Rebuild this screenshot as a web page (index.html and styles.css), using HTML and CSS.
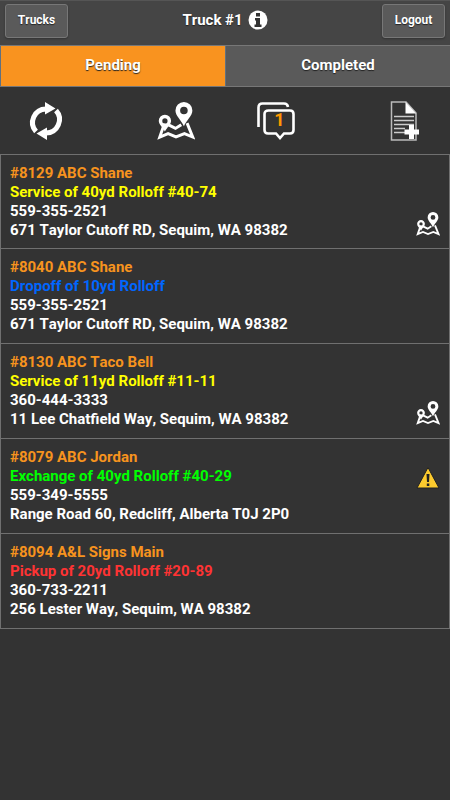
FILE: index.html
```html
<!DOCTYPE html>
<html lang="en">
<head>
<meta charset="utf-8">
<meta name="viewport" content="width=device-width, initial-scale=1">
<title>Truck #1</title>
<link rel="stylesheet" href="styles.css">
</head>
<body>
<svg class="defs" aria-hidden="true">
  <symbol id="map" viewBox="0 0 36 36">
    <path fill="none" stroke="currentColor" stroke-width="2.8" d="M7 20.5 2.6 33.2 10.500 30 18 33 26 30 33.800 33.200 28.500 20M10.500 21.500 17.500 25 23 21.500"/>
    <path fill="currentColor" fill-rule="evenodd" d="M25.500 0a8 8 0 0 1 8 8.200C33.500 13 28 17 25.500 23 23 17 17.500 13 17.500 8.200A8 8 0 0 1 25.500 0Zm0 4.500a3.600 3.600 0 1 0 0 7.200 3.600 3.600 0 0 0 0-7.200ZM7.500 12a5.800 5.800 0 0 1 5.800 6C13.300 21.500 9.500 24 7.500 28 5.500 24 1.700 21.500 1.700 18a5.800 5.800 0 0 1 5.800-6Zm0 3.400a2.500 2.500 0 1 0 0 5 2.500 2.500 0 0 0 0-5Z"/>
  </symbol>
</svg>
<header class="bar">
  <button class="btn" type="button">Trucks</button>
  <h1 class="title">Truck #1
    <svg class="info" viewBox="0 0 20 20" aria-hidden="true"><circle cx="10" cy="10" r="9.500" fill="#fff"/><path fill="#333" d="M8 3h4v3.500H8zM7 8h5v6.500h1.500V17h-7v-2.500H8v-4H7z"/></svg>
  </h1>
  <button class="btn" type="button">Logout</button>
</header>
<nav class="tabs">
  <button class="tab active" type="button">Pending</button>
  <button class="tab" type="button">Completed</button>
</nav>
<div class="tools">
  <button class="tool" type="button" aria-label="Refresh">
    <svg class="icon" viewBox="0 0 38 38"><g fill="none" stroke="#fff" stroke-width="5"><path d="M9 29.500A13.500 13.500 0 0 1 19 7"/><path d="M29 8.500A13.500 13.500 0 0 1 19 31"/></g><path fill="#fff" d="m18 0 10.500 6.500L18 12.500ZM20 25.500v12.500L9.500 31.500Z"/></svg>
  </button>
  <div class="tool-pair">
    <button class="tool" type="button" aria-label="Map"><svg class="icon"><use href="#map"/></svg></button>
    <button class="tool" type="button" aria-label="Messages">
      <svg class="icon" viewBox="0 0 38 38"><g fill="none" stroke="#fff" stroke-width="2.600"><path d="M1.500 25V5.500q0-4 4-4H27q3.500 0 4 3.500"/><path d="M11.500 8.500H33q3.500 0 3.500 3.500v16q0 3.500-3.500 3.500h-6l-4 4.500-4-4.500h-8Q7.500 31.500 7.500 28V12q0-3.500 4-3.500Z"/></g></svg>
      <span class="count">1</span>
    </button>
  </div>
  <button class="tool" type="button" aria-label="Add document">
    <svg class="icon wide" viewBox="0 0 30 40" preserveAspectRatio="xMaxYMid"><path fill="none" stroke="#bbb" stroke-width="1.500" d="M1.500 1H16l10 11v27H1.500Z"/><path fill="#fff" d="M15.500 1 26 12.500H15.500Z"/><path stroke="#ccc" stroke-width="1.500" d="M4 15.500h20M4 19.500h20M4 23.500h20M4 27.500h11M4 31.500h11"/><path fill="#fff" d="M19 24h5v4.500h5v5h-5V38h-5v-4.500h-4.500v-5H19Z"/></svg>
  </button>
</div>
<main>
  <ul class="jobs">
    <li class="job">
      <div class="details"><p class="name">#8129 ABC Shane</p><p class="service">Service of 40yd Rolloff #40-74</p><p>559-355-2521</p><p>671 Taylor Cutoff RD, Sequim, WA 98382</p></div>
      <svg class="mark"><use href="#map"/></svg>
    </li>
    <li class="job">
      <div class="details"><p class="name">#8040 ABC Shane</p><p class="dropoff">Dropoff of 10yd Rolloff</p><p>559-355-2521</p><p>671 Taylor Cutoff RD, Sequim, WA 98382</p></div>
    </li>
    <li class="job">
      <div class="details"><p class="name">#8130 ABC Taco Bell</p><p class="service">Service of 11yd Rolloff #11-11</p><p>360-444-3333</p><p>11 Lee Chatfield Way, Sequim, WA 98382</p></div>
      <svg class="mark"><use href="#map"/></svg>
    </li>
    <li class="job">
      <div class="details"><p class="name">#8079 ABC Jordan</p><p class="exchange">Exchange of 40yd Rolloff #40-29</p><p>559-349-5555</p><p>Range Road 60, Redcliff, Alberta T0J 2P0</p></div>
      <svg class="mark warning" viewBox="0 0 24 24"><path fill="#fdcb2e" stroke="#222" stroke-linejoin="round" d="M12 1.500 23 22H1Z"/><path fill="#222" d="M10.500 8h3l-.5 8h-2zM10.800 17.500h2.500V20h-2.500z"/></svg>
    </li>
    <li class="job">
      <div class="details"><p class="name">#8094 A&amp;L Signs Main</p><p class="pickup">Pickup of 20yd Rolloff #20-89</p><p>360-733-2211</p><p>256 Lester Way, Sequim, WA 98382</p></div>
    </li>
  </ul>
</main>
</body>
</html>
```

FILE: styles.css
```css
* { box-sizing: border-box; }

body {
  margin: 0;
  background: #333;
  color: #fff;
  font: bold 15px/19px Roboto, sans-serif;
  font-kerning: none;
}

button {
  margin: 0;
  color: inherit;
  font: inherit;
  font-kerning: none;
  cursor: pointer;
}

.defs { position: absolute; width: 0; height: 0; }

.bar {
  display: flex;
  justify-content: space-between;
  align-items: flex-start;
  height: 45px;
  padding: 3px 5px;
  border-top: 1px solid #555;
  background: #454545;
  text-shadow: 0 1px 1px #222;
}

.btn {
  width: 63px;
  height: 34px;
  padding: 0 0 2px;
  border: 1px solid #777;
  border-radius: 3px;
  background: #5a5a5a;
  box-shadow: 0 1px 2px #333;
  font-size: 12px;
  text-shadow: 0 1px 1px #222;
}

.title {
  display: flex;
  align-items: center;
  gap: 5px;
  margin: 0;
  padding-top: 6px;
  font-size: 15px;
  line-height: 20px;
}

.info { width: 20px; height: 20px; }

.tabs {
  display: grid;
  grid-template-columns: 1fr 1fr;
  height: 42px;
  border-top: 1px solid #777;
  border-bottom: 1px solid #777;
}

.tab {
  padding: 0 0 2px;
  border: 0;
  border-left: 1px solid #607080;
  background: #5a5a5a;
  text-shadow: 0 1px 1px #222;
}

.tab.active { background: #f9931f; }

.tools {
  display: flex;
  justify-content: space-between;
  align-items: center;
  height: 67px;
  padding: 0 30px 0 27px;
}

.tool-pair {
  display: flex;
  gap: 62px;
  padding-top: 1px;
}

.tool {
  position: relative;
  padding: 0;
  border: 0;
  background: none;
}

.icon { display: block; width: 38px; height: 38px; }

.icon.wide { width: 34px; height: 40px; }

.count {
  position: absolute;
  inset: 8px 0 auto 8px;
  color: #f90;
  font-size: 18px;
  line-height: 20px;
}

.jobs {
  margin: 0;
  padding: 0;
  border: 1px solid #707070;
  border-top: 0;
  list-style: none;
}

.job {
  display: flex;
  justify-content: space-between;
  align-items: flex-end;
  padding: 9px 9px 8px;
  border-top: 1px solid #707070;
}

.job + .job { padding-bottom: 9px; }

.job p { margin: 0; }

.name { color: #f7931e; }
.service { color: #ff0; }
.dropoff { color: #06f; }
.exchange { color: #0f0; }
.pickup { color: #f33; }

.mark { flex: none; width: 24px; height: 24px; margin-bottom: 4px; }
.mark.warning { margin-bottom: 34px; }
```
